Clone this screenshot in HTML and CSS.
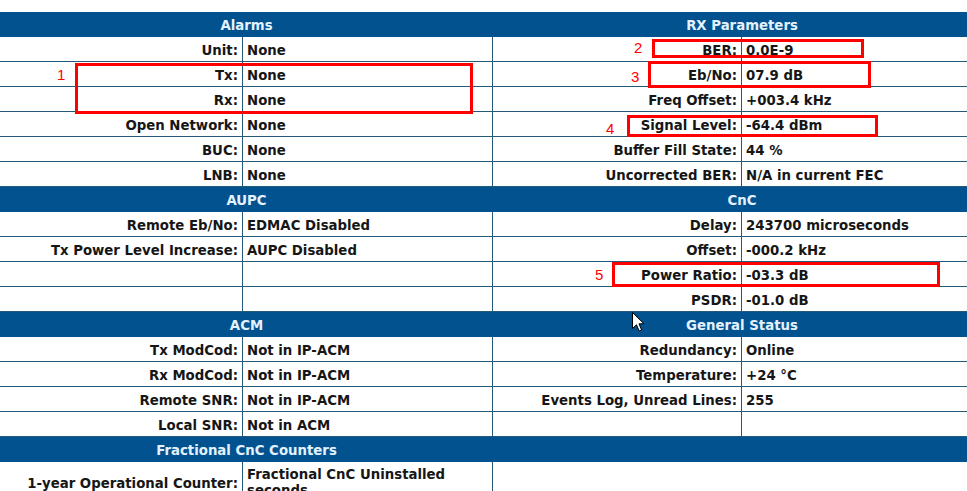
FILE: index.html
```html
<!DOCTYPE html>
<html>
<head>
<meta charset="utf-8">
<link rel="stylesheet" href="styles.css">
</head>
<body>
<div class="page">
  <div class="grid">
    <div class="hd">Alarms</div><div class="hd">RX Parameters</div>
    <div class="lb">Unit:</div><div class="vl">None</div><div class="lb">BER:</div><div class="vl">0.0E-9</div>
    <div class="lb">Tx:</div><div class="vl">None</div><div class="lb">Eb/No:</div><div class="vl">07.9 dB</div>
    <div class="lb">Rx:</div><div class="vl">None</div><div class="lb">Freq Offset:</div><div class="vl">+003.4 kHz</div>
    <div class="lb">Open Network:</div><div class="vl">None</div><div class="lb">Signal Level:</div><div class="vl">-64.4 dBm</div>
    <div class="lb">BUC:</div><div class="vl">None</div><div class="lb">Buffer Fill State:</div><div class="vl">44 %</div>
    <div class="lb">LNB:</div><div class="vl">None</div><div class="lb">Uncorrected BER:</div><div class="vl">N/A in current FEC</div>

    <div class="hd">AUPC</div><div class="hd">CnC</div>
    <div class="lb">Remote Eb/No:</div><div class="vl">EDMAC Disabled</div><div class="lb">Delay:</div><div class="vl">243700 microseconds</div>
    <div class="lb">Tx Power Level Increase:</div><div class="vl">AUPC Disabled</div><div class="lb">Offset:</div><div class="vl">-000.2 kHz</div>
    <div class="lb"></div><div class="vl"></div><div class="lb">Power Ratio:</div><div class="vl">-03.3 dB</div>
    <div class="lb"></div><div class="vl"></div><div class="lb">PSDR:</div><div class="vl">-01.0 dB</div>

    <div class="hd">ACM</div><div class="hd">General Status</div>
    <div class="lb">Tx ModCod:</div><div class="vl">Not in IP-ACM</div><div class="lb">Redundancy:</div><div class="vl">Online</div>
    <div class="lb">Rx ModCod:</div><div class="vl">Not in IP-ACM</div><div class="lb">Temperature:</div><div class="vl">+24 °C</div>
    <div class="lb">Remote SNR:</div><div class="vl">Not in IP-ACM</div><div class="lb">Events Log, Unread Lines:</div><div class="vl">255</div>
    <div class="lb">Local SNR:</div><div class="vl">Not in ACM</div><div class="lb"></div><div class="vl"></div>

    <div class="hd">Fractional CnC Counters</div><div class="hd"></div>
    <div class="lb tall">1-year Operational Counter:</div><div class="vl tall">Fractional CnC Uninstalled seconds</div><div class="blank"></div>
  </div>

  <div class="mark m1"></div><span class="num n1">1</span>
  <div class="mark m2"></div><span class="num n2">2</span>
  <div class="mark m3"></div><span class="num n3">3</span>
  <div class="mark m4"></div><span class="num n4">4</span>
  <div class="mark m5"></div><span class="num n5">5</span>

  <svg class="cursor" width="13" height="20" viewBox="0 0 13 20">
    <path d="M0.5 0.5 L0.5 16.5 L4.5 12.8 L7.2 19 L9.6 18 L7 11.8 L12 11.8 Z" fill="#fff" stroke="#000" stroke-width="1"/>
  </svg>
</div>
</body>
</html>
```

FILE: styles.css
```css
html, body {
  margin: 0;
  padding: 0;
  background: #fff;
  overflow: hidden;
}
.page {
  position: relative;
  width: 967px;
  height: 491px;
  overflow: hidden;
  padding-top: 12px;
  box-sizing: border-box;
  font-family: "DejaVu Sans", Verdana, sans-serif;
  font-size: 13.3px;
  font-weight: bold;
  color: #161616;
}
.grid {
  display: grid;
  grid-template-columns: 243px 250px 249px 249px;
  width: 991px;
}
.hd {
  grid-column: span 2;
  box-sizing: border-box;
  height: 25px;
  padding-top: 2px;
  background: #01528f;
  color: #e4f2ff;
  display: flex;
  align-items: center;
  justify-content: center;
}
.lb, .vl {
  box-sizing: border-box;
  height: 25px;
  padding-top: 3px;
  border-right: 1px solid #24597a;
  border-bottom: 1px solid #24597a;
  display: flex;
  align-items: center;
  white-space: nowrap;
  line-height: 16px;
}
.lb {
  justify-content: flex-end;
  padding-right: 4px;
}
.vl {
  padding-left: 4px;
}
.tall {
  height: 42px;
  white-space: normal;
}
.vl.tall {
  align-items: flex-start;
  padding-top: 5px;
  padding-right: 20px;
}
.blank {
  grid-column: span 2;
  height: 42px;
}
.mark {
  position: absolute;
  box-sizing: border-box;
  border: 3px solid #f00;
}
.m1 { left: 75px; top: 63px; width: 398px; height: 51px; }
.m2 { left: 652px; top: 39px; width: 212px; height: 19px; }
.m3 { left: 648px; top: 61px; width: 223px; height: 27px; }
.m4 { left: 627px; top: 115px; width: 251px; height: 22px; }
.m5 { left: 612px; top: 262px; width: 328px; height: 25px; }
.num {
  position: absolute;
  font-family: "Liberation Sans", Arial, sans-serif;
  font-weight: normal;
  font-size: 15px;
  line-height: 16px;
  color: #f00;
}
.n1 { left: 57px; top: 67px; }
.n2 { left: 634px; top: 40px; }
.n3 { left: 631px; top: 69px; }
.n4 { left: 606px; top: 121px; }
.n5 { left: 595px; top: 267px; }
.cursor {
  position: absolute;
  left: 632px;
  top: 312px;
}
```
